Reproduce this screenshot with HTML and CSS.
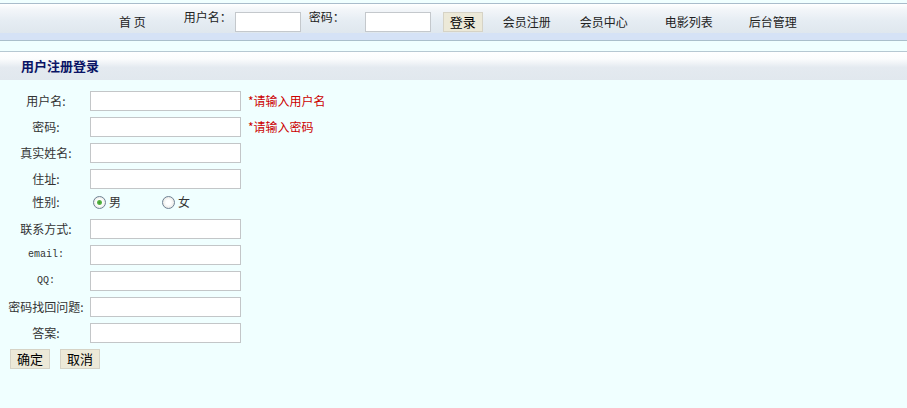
FILE: index.html
```html
<!DOCTYPE html>
<html lang="zh-CN">
<head>
    <meta charset="UTF-8">
    <title>用户注册登录</title>
    <link rel="stylesheet" href="styles.css">
</head>
<body>
    <div class="nav">
        <a class="nav-link home">首&nbsp;页</a>
        <span class="nav-label user">用户名：</span>
        <input class="nav-input user-input" type="text">
        <span class="nav-label pwd">密码：</span>
        <input class="nav-input pwd-input" type="password">
        <button class="btn login">登录</button>
        <a class="nav-link reg">会员注册</a>
        <a class="nav-link center">会员中心</a>
        <a class="nav-link movies">电影列表</a>
        <a class="nav-link admin">后台管理</a>
    </div>
    <div class="spacer"></div>
    <div class="title">用户注册登录</div>

    <form class="reg-form">
        <div class="row">
            <span class="label">用户名:</span>
            <input class="field" type="text">
            <span class="tip">*请输入用户名</span>
        </div>
        <div class="row">
            <span class="label">密码:</span>
            <input class="field" type="password">
            <span class="tip">*请输入密码</span>
        </div>
        <div class="row">
            <span class="label">真实姓名:</span>
            <input class="field" type="text">
        </div>
        <div class="row">
            <span class="label">住址:</span>
            <input class="field" type="text">
        </div>
        <div class="row sex">
            <span class="label">性别:</span>
            <label class="radio male"><input type="radio" name="sex" checked>男</label>
            <label class="radio female"><input type="radio" name="sex">女</label>
        </div>
        <div class="row">
            <span class="label">联系方式:</span>
            <input class="field" type="text">
        </div>
        <div class="row">
            <span class="label latin">email:</span>
            <input class="field" type="text">
        </div>
        <div class="row">
            <span class="label latin">QQ:</span>
            <input class="field" type="text">
        </div>
        <div class="row">
            <span class="label">密码找回问题:</span>
            <input class="field" type="text">
        </div>
        <div class="row">
            <span class="label">答案:</span>
            <input class="field" type="text">
        </div>
        <div class="buttons">
            <button class="btn" type="button">确定</button>
            <button class="btn" type="button">取消</button>
        </div>
    </form>
</body>
</html>
```

FILE: styles.css
```css
body{margin: 0; background: #f0ffff; font-family: "Noto Sans CJK SC", sans-serif; font-size: 12px; color: #333;}

.nav{display: flex; align-items: center; height: 36px; margin-top: 3px; padding-left: 119px; border-top: 1px solid #a9bccb; border-bottom: 1px solid #aabfcb;
    background: linear-gradient(to bottom, #ffffff 0%, #f3f6f9 15%, #e6edf3 45%, #dfe7ee 80%, #d5e2f6 81%, #d5e2f6 100%);}
.nav-link{color: #222; line-height: 16px; cursor: pointer;}
.nav-label{align-self: flex-start; margin-top: 5px; line-height: 16px; color: #222;}
.nav-input{box-sizing: border-box; width: 66px; height: 20px; border: 1px solid #c4c8cc; background: #fff; margin: 0;}
.user{margin-left: 38px;}
.user-input{margin-left: 3px;}
.pwd{margin-left: 8px;}
.pwd-input{margin-left: 20px;}
.login{margin-left: 12px;}
.reg{margin-left: 20px;}
.center{margin-left: 29px;}
.movies{margin-left: 37px;}
.admin{margin-left: 36px;}

.btn{box-sizing: border-box; width: 40px; height: 20px; padding: 0; border: 1px solid #d6d3c6; background: #ece9d8; font-family: "Noto Sans CJK SC", sans-serif; font-size: 13px; line-height: 18px; color: #000; cursor: pointer;}

.spacer{height: 10px;}
.title{height: 28px; line-height: 28px; padding-left: 21px; border-top: 1px solid #b6c8d2; font-size: 13px; font-weight: bold; color: #0a1466;
    background: linear-gradient(to bottom, #ffffff 0%, #fbfcfd 25%, #e4eaf0 55%, #e1e8ee 100%);}

.reg-form{padding-top: 8px;}
.row{display: flex; align-items: center; height: 26px;}
.row.sex{height: 20px; padding-bottom: 4px;}
.label{width: 88px; padding-left: 2px; text-align: center; line-height: 16px;}
.label.latin{font-family: "Liberation Mono", monospace; font-size: 10px;}
.field{box-sizing: border-box; width: 151px; height: 20px; margin: 0; border: 1px solid #c3c6c8; background: #fff;}
.tip{margin-left: 7px; color: #c00; line-height: 16px;}

.radio{display: flex; align-items: center; line-height: 16px;}
.radio input{appearance: none; box-sizing: border-box; width: 13px; height: 13px; margin: 0 3px 0 0; border: 1px solid #6f8193; border-radius: 50%;
    background: radial-gradient(circle at 50% 50%, #ffffff 30%, #dcdcd6 100%);}
.radio input:checked{background: radial-gradient(circle at 50% 50%, #3d9a30 0, #5cb84a 2px, #ffffff 3px, #ffffff 30%, #dcdcd6 100%);}
.male{margin-left: 3px;}
.female{margin-left: 41px;}

.buttons{display: flex; gap: 10px; padding-left: 10px; padding-top: 3px;}
```
